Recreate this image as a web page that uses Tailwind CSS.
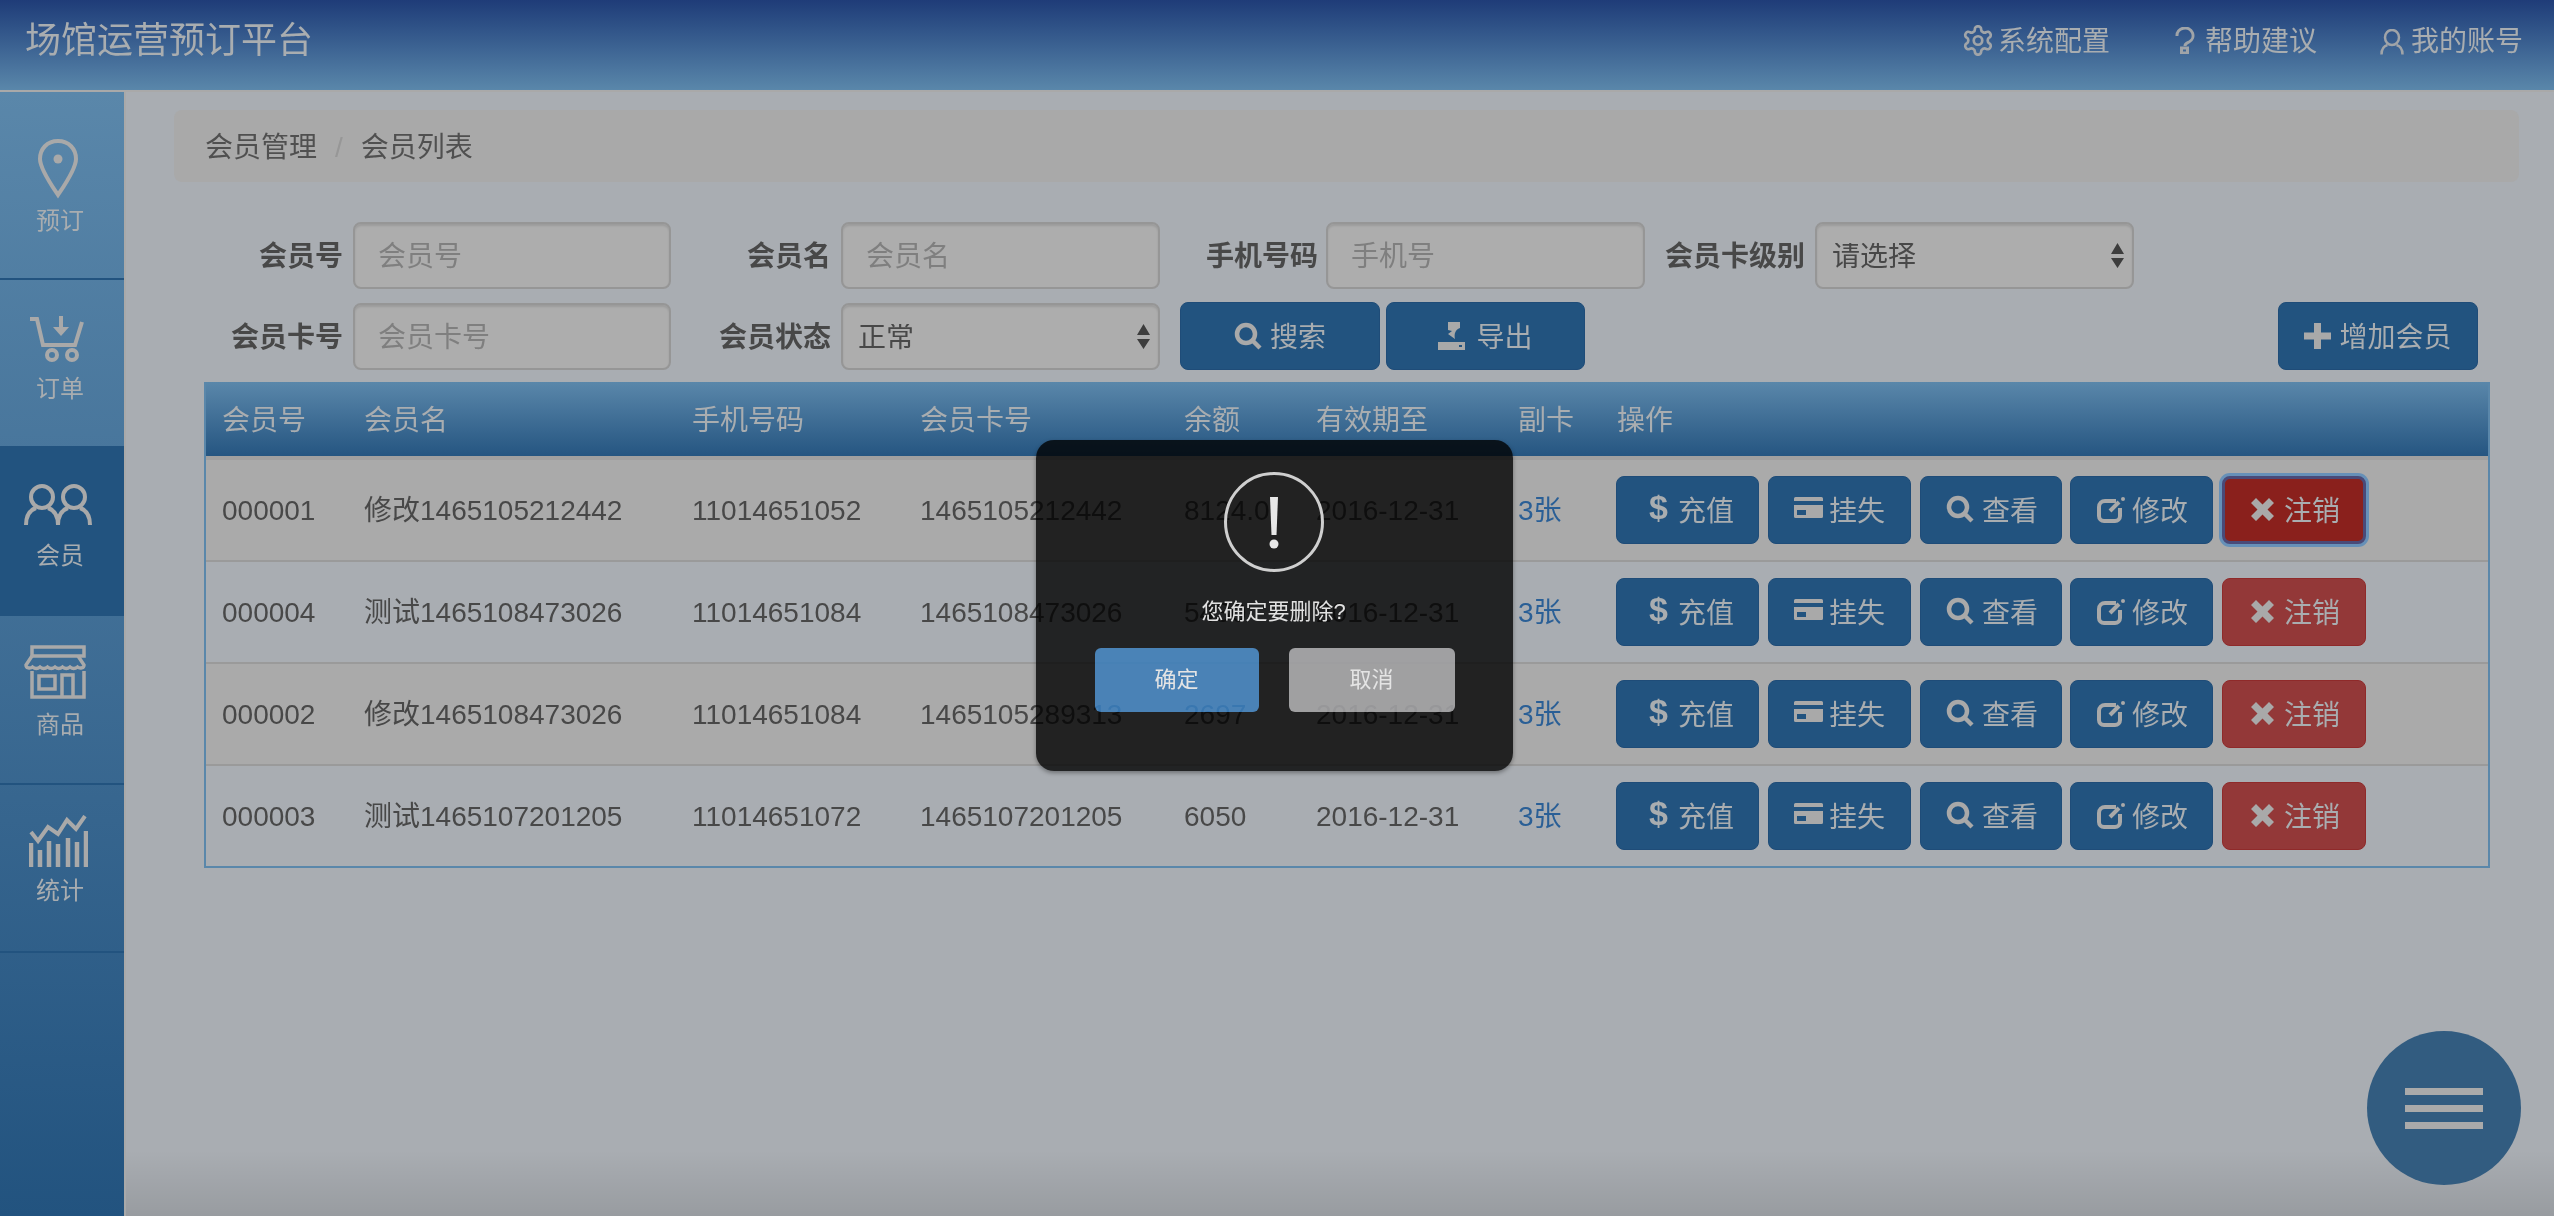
<!DOCTYPE html>
<html lang="zh-CN">
<head>
<meta charset="utf-8">
<title>场馆运营预订平台</title>
<script src="https://cdn.jsdelivr.net/npm/@tailwindcss/browser@4"></script>
</head>
<body class="m-0">
<div class="relative w-[2554px] h-[1216px] overflow-hidden flex flex-col bg-[#a9adb2] text-[#484848] text-[28px] leading-none font-['Liberation_Sans','Noto_Sans_CJK_SC',sans-serif]">

  <!-- top bar -->
  <header class="h-[92px] shrink-0 border-b-2 border-[#a9a9a9] bg-linear-to-b from-[#1f3c78] to-[#5a87aa] flex items-center pr-[31px] pl-[25px] text-[#a9adb0]">
    <h1 class="text-[36px] font-normal -mt-[9px]">场馆运营预订平台</h1>
    <nav class="ml-auto flex items-center -mt-[7px]">
      <a class="flex items-center gap-[3px]">
        <svg class="w-[34px] h-[35px] -mt-[2px]" viewBox="0 0 24 24" fill="none" stroke="#a0a4a8" stroke-width="1.900"><path d="M12.220 2h-.44a2 2 0 0 0-2 2v.18a2 2 0 0 1-1 1.730l-.43.25a2 2 0 0 1-2 0l-.15-.08a2 2 0 0 0-2.730.73l-.22.38a2 2 0 0 0 .73 2.730l.15.1a2 2 0 0 1 1 1.720v.51a2 2 0 0 1-1 1.740l-.15.09a2 2 0 0 0-.73 2.730l.22.38a2 2 0 0 0 2.730.73l.15-.08a2 2 0 0 1 2 0l.43.25a2 2 0 0 1 1 1.730V20a2 2 0 0 0 2 2h.44a2 2 0 0 0 2-2v-.18a2 2 0 0 1 1-1.730l.43-.25a2 2 0 0 1 2 0l.15.08a2 2 0 0 0 2.730-.73l.22-.39a2 2 0 0 0-.73-2.730l-.15-.08a2 2 0 0 1-1-1.740v-.5a2 2 0 0 1 1-1.740l.15-.09a2 2 0 0 0 .73-2.730l-.22-.38a2 2 0 0 0-2.730-.73l-.15.08a2 2 0 0 1-2 0l-.43-.25a2 2 0 0 1-1-1.730V4a2 2 0 0 0-2-2z"/><circle cx="12" cy="12" r="3"/></svg>
        <span>系统配置</span>
      </a>
      <a class="flex items-center gap-[10px] ml-[65px]">
        <svg class="w-[20px] h-[27px] -mt-[2px]" viewBox="0 0 20 27" fill="none" stroke="#a0a4a8" stroke-width="3"><path d="M2 9a8 7.500 0 1 1 12 6c-3 1.500-4 1.500-4 4"/><rect x="6.500" y="21" width="6" height="5"/></svg>
        <span>帮助建议</span>
      </a>
      <a class="flex items-center gap-[7px] ml-[63px]">
        <svg class="w-[24px] h-[26px]" viewBox="0 0 24 26" fill="none" stroke="#a0a4a8" stroke-width="2.500"><ellipse cx="12" cy="8.500" rx="7" ry="7.500"/><path d="M1.500 25.500c0-5 2.500-8.500 6-9.500M22.500 25.500c0-5-2.500-8.500-6-9.500"/></svg>
        <span>我的账号</span>
      </a>
    </nav>
  </header>

  <div class="flex flex-1 min-h-0">
    <!-- side nav -->
    <aside class="w-[126px] shrink-0 border-r-2 border-[#a9a9a9] bg-linear-to-b from-[#5a87aa] to-[#22537f] text-[#a9adb0] text-[24px]">
      <a class="h-[188px] border-b-2 border-[#22537f] pr-[4px] flex flex-col items-center pt-[47px]">
        <svg class="w-[42px] h-[60px] -ml-[4px]" viewBox="0 0 42 60" fill="none" stroke="#a9a9a9" stroke-width="4"><path d="M21 2C10 2 3 10 3 20c0 10 12 27 18 36 6-9 18-26 18-36C39 10 32 2 21 2z"/><circle cx="21" cy="20" r="4.500" fill="#a9a9a9" stroke="none"/></svg>
        <span class="mt-[10px]">预订</span>
      </a>
      <a class="h-[166px] pr-[4px] flex flex-col items-center pt-[36px]">
        <svg class="w-[56px] h-[46px] -ml-[4px]" viewBox="0 0 56 46" fill="none" stroke="#a9a9a9" stroke-width="4"><path d="M0 3h7l6 26h32l7-23"/><path d="M31 0v12" /><path d="M23 11h16l-8 9z" fill="#a9a9a9" stroke="none"/><circle cx="22" cy="39" r="5"/><circle cx="42" cy="39" r="5"/></svg>
        <span class="mt-[15px]">订单</span>
      </a>
      <a class="h-[170px] bg-[#22537f] pr-[4px] flex flex-col items-center pt-[38px]">
        <svg class="w-[68px] h-[41px] -ml-[4px]" viewBox="0 0 68 41" fill="none" stroke="#a9a9a9" stroke-width="4"><circle cx="18" cy="13" r="11"/><circle cx="50" cy="13" r="11"/><path d="M2 41c0-9 4-15 10-17M24 24c6 2 10 8 10 17c0-9 4-15 10-17M56 24c6 2 10 8 10 17"/></svg>
        <span class="mt-[19px]">会员</span>
      </a>
      <a class="h-[169px] border-b-2 border-[#22537f] pr-[4px] flex flex-col items-center pt-[29px]">
        <svg class="w-[68px] h-[54px] -ml-[4px]" viewBox="0 0 68 54" fill="none" stroke="#a9a9a9" stroke-width="3.500"><path d="M8 2h52v9H8z"/><path d="M8 11L2 20c0 3 4 4 6.500 2c2.500 2 5 2 7.500 0c2.500 2 5 2 7.500 0c2.500 2 5 2 7.500 0c2.500 2 5 2 7.500 0c2.500 2 5 2 7.500 0c2.500 2 5 2 7.500 0c2.500 2 6.500 1 6.500-2l-6-9"/><path d="M8 26v26h52V26"/><path d="M38 52V30h11v22"/><rect x="15" y="31" width="16" height="13"/></svg>
        <span class="mt-[14px]">商品</span>
      </a>
      <a class="h-[168px] border-b-2 border-[#22537f] pr-[4px] flex flex-col items-center pt-[30px]">
        <svg class="w-[59px] h-[52px] -ml-[4px]" viewBox="0 0 59 52" fill="none" stroke="#a9a9a9"><path stroke-width="4" d="M2 17l7 9L19 12l10 7L38 5l9 9L56 1"/><path stroke-width="4.500" d="M2 28v24M11 35v17M20 26v26M29 29v23M39 23v29M48 27v25M57 16v36"/></svg>
        <span class="mt-[12px]">统计</span>
      </a>
    </aside>

    <!-- main -->
    <main class="flex-1 min-w-0 pl-[48px] pr-[35px] pt-[18px]">
      <nav class="h-[72px] bg-[#a9a9a9] rounded-[8px] flex items-center pl-[31px] pt-[3px] text-[#505050]">
        <span>会员管理</span>
        <span class="mx-[18px] text-[#979797]">/</span>
        <span>会员列表</span>
      </nav>

      <form class="mt-[40px] ml-[30px] mr-[41px]">
        <div class="flex">
          <label class="w-[467px] flex justify-end items-center gap-[10px] font-bold"><span class="pt-[3px]">会员号</span>
            <input class="w-[318px] h-[67px] pl-[23px] pt-[3px] font-normal bg-[#adadad] border-2 border-[#969696] rounded-[8px] shadow-[inset_0_2px_2px_rgba(0,0,0,.1)] placeholder:text-[#7f7f7f]" placeholder="会员号"></label>
          <label class="w-[489px] flex justify-end items-center gap-[10px] font-bold"><span class="pt-[3px]">会员名</span>
            <input class="w-[319px] h-[67px] pl-[23px] pt-[3px] font-normal bg-[#adadad] border-2 border-[#969696] rounded-[8px] shadow-[inset_0_2px_2px_rgba(0,0,0,.1)] placeholder:text-[#7f7f7f]" placeholder="会员名"></label>
          <label class="w-[485px] flex justify-end items-center gap-[8px] font-bold"><span class="pt-[3px]">手机号码</span>
            <input class="w-[319px] h-[67px] pl-[23px] pt-[3px] font-normal bg-[#adadad] border-2 border-[#969696] rounded-[8px] shadow-[inset_0_2px_2px_rgba(0,0,0,.1)] placeholder:text-[#7f7f7f]" placeholder="手机号"></label>
          <label class="w-[489px] flex justify-end items-center gap-[10px] font-bold"><span class="pt-[3px]">会员卡级别</span>
            <span class="relative block">
              <select class="block appearance-none w-[319px] h-[67px] pl-[15px] pt-[3px] font-normal bg-[#adadad] border-2 border-[#969696] rounded-[8px] shadow-[inset_0_2px_2px_rgba(0,0,0,.1)]"><option>请选择</option></select>
              <svg class="absolute right-[10px] top-[21px] w-[13px] h-[25px]" viewBox="0 0 13 25" fill="#3d3d3d"><path d="M6.500 0L13 11H0zM0 15h13L6.500 25z"/></svg>
            </span></label>
        </div>
        <div class="flex mt-[13px] h-[68px]">
          <label class="w-[467px] flex justify-end items-center gap-[10px] font-bold"><span class="pt-[3px]">会员卡号</span>
            <input class="w-[318px] h-[67px] pl-[23px] pt-[3px] font-normal bg-[#adadad] border-2 border-[#969696] rounded-[8px] shadow-[inset_0_2px_2px_rgba(0,0,0,.1)] placeholder:text-[#7f7f7f]" placeholder="会员卡号"></label>
          <label class="w-[489px] flex justify-end items-center gap-[10px] font-bold"><span class="pt-[3px]">会员状态</span>
            <span class="relative block">
              <select class="block appearance-none w-[319px] h-[67px] pl-[15px] pt-[3px] font-normal bg-[#adadad] border-2 border-[#969696] rounded-[8px] shadow-[inset_0_2px_2px_rgba(0,0,0,.1)]"><option>正常</option></select>
              <svg class="absolute right-[10px] top-[21px] w-[13px] h-[25px]" viewBox="0 0 13 25" fill="#3d3d3d"><path d="M6.500 0L13 11H0zM0 15h13L6.500 25z"/></svg>
            </span></label>
          <button type="button" class="ml-[20px] w-[200px] h-[68px] rounded-[8px] bg-[#22537f] border border-[#1f4c78] text-[#a9adb0] pt-[3px] flex items-center justify-center gap-[8px]">
            <svg class="w-[28px] h-[28px] -mt-[3px]" viewBox="0 0 28 28" fill="none" stroke="#a9a9a9" stroke-width="4.500"><circle cx="12" cy="12" r="9"/><path d="M18 18l8 8"/></svg>搜索</button>
          <button type="button" class="ml-[6px] w-[199px] h-[68px] rounded-[8px] bg-[#22537f] border border-[#1f4c78] text-[#a9adb0] pt-[3px] flex items-center justify-center gap-[11px]">
            <svg class="w-[27px] h-[28px] -mt-[3px]" viewBox="0 0 27 28" fill="#a9a9a9"><path d="M10 0h12v6c-5 2-6 6-5 11l-7-5 4-3-4-1z"/><path d="M0 20h27v8H0z"/><rect x="21" y="23" width="3" height="2" fill="#22537f"/></svg>导出</button>
          <button type="button" class="ml-auto w-[200px] h-[68px] rounded-[8px] bg-[#22537f] border border-[#1f4c78] text-[#a9adb0] pt-[3px] flex items-center justify-center gap-[8px]">
            <svg class="w-[27px] h-[26px] -mt-[3px]" viewBox="0 0 27 26" fill="#a9a9a9"><path d="M10 0h7v9.500h10v7H17V26h-7v-9.500H0v-7h10z"/></svg>增加会员</button>
        </div>
      </form>

      <div class="mt-[12px] ml-[30px] w-[2286px] border-x-2 border-b-2 border-[#5a87aa]">
        <table class="w-full table-fixed border-separate border-spacing-0">
          <colgroup>
            <col class="w-[141px]"><col class="w-[328px]"><col class="w-[228px]"><col class="w-[264px]"><col class="w-[132px]"><col class="w-[202px]"><col class="w-[99px]"><col>
          </colgroup>
          <thead>
            <tr class="text-left text-[#a9adb0] bg-linear-to-b from-[#5a87aa] to-[#22537f]">
              <th class="h-[78px] pl-[16px] pt-[3px] font-normal border-b-4 border-[#a0a0a0]">会员号</th>
              <th class="pl-[17px] pt-[3px] font-normal border-b-4 border-[#a0a0a0]">会员名</th>
              <th class="pl-[17px] pt-[3px] font-normal border-b-4 border-[#a0a0a0]">手机号码</th>
              <th class="pl-[17px] pt-[3px] font-normal border-b-4 border-[#a0a0a0]">会员卡号</th>
              <th class="pl-[17px] pt-[3px] font-normal border-b-4 border-[#a0a0a0]">余额</th>
              <th class="pl-[17px] pt-[3px] font-normal border-b-4 border-[#a0a0a0]">有效期至</th>
              <th class="pl-[17px] pt-[3px] font-normal border-b-4 border-[#a0a0a0]">副卡</th>
              <th class="pl-[17px] pt-[3px] font-normal border-b-4 border-[#a0a0a0]">操作</th>
            </tr>
          </thead>
          <tbody>
            <tr class="bg-[#aaaaaa]">
              <td class="h-[102px] pt-[2px] pl-[16px] border-b-2 border-[#9a9a9a]">000001</td>
              <td class="pt-[2px] pl-[17px] border-b-2 border-[#9a9a9a]">修改1465105212442</td>
              <td class="pt-[2px] pl-[17px] border-b-2 border-[#9a9a9a]">11014651052</td>
              <td class="pt-[2px] pl-[17px] border-b-2 border-[#9a9a9a]">1465105212442</td>
              <td class="pt-[2px] pl-[17px] border-b-2 border-[#9a9a9a]">8124.0</td>
              <td class="pt-[2px] pl-[17px] border-b-2 border-[#9a9a9a]">2016-12-31</td>
              <td class="pt-[2px] pl-[17px] border-b-2 border-[#9a9a9a] text-[#2a5f96]">3张</td>
              <td class="pl-[16px] border-b-2 border-[#9a9a9a]">
                <div class="flex text-[#a9adb0]">
                  <button class="w-[143px] h-[68px] pl-[32px] pt-[3px] rounded-[8px] bg-[#22537f] border border-[#1f4c78] flex items-center gap-[11px]"><b class="text-[34px] w-[18px] font-bold -mt-[10px]">$</b>充值</button>
                  <button class="ml-[9px] w-[143px] h-[68px] pl-[25px] pt-[3px] rounded-[8px] bg-[#22537f] border border-[#1f4c78] flex items-center gap-[6px]"><svg class="w-[29px] h-[21px] -mt-[8px]" viewBox="0 0 29 21" fill="#a9a9a9"><path d="M0 1.500A1.500 1.500 0 0 1 1.500 0h26A1.500 1.500 0 0 1 29 1.500V4H0zM0 8h29v11.500a1.500 1.500 0 0 1-1.500 1.500h-26A1.500 1.500 0 0 1 0 19.500z"/><rect x="3" y="13" width="9" height="5" fill="#22537f"/></svg>挂失</button>
                  <button class="ml-[9px] w-[142px] h-[68px] pl-[25px] pt-[3px] rounded-[8px] bg-[#22537f] border border-[#1f4c78] flex items-center gap-[8px]"><svg class="w-[28px] h-[28px] -mt-[5px]" viewBox="0 0 28 28" fill="none" stroke="#a9a9a9" stroke-width="4.500"><circle cx="12" cy="12" r="9"/><path d="M18 18l8 8"/></svg>查看</button>
                  <button class="ml-[8px] w-[143px] h-[68px] pl-[26px] pt-[3px] rounded-[8px] bg-[#22537f] border border-[#1f4c78] flex items-center gap-[6px]"><svg class="w-[29px] h-[27px] -mt-[5px]" viewBox="0 0 29 27" fill="none" stroke="#a9a9a9" stroke-width="4"><path d="M19 5H8a6 6 0 0 0-6 6v9a5 5 0 0 0 5 5h11a5 5 0 0 0 5-5v-8"/><path d="M13 15l9-9"/><circle cx="26" cy="3" r="2" fill="#a9a9a9" stroke="none"/></svg>修改</button>
                  <button class="ml-[9px] w-[144px] h-[68px] pl-[26px] pt-[3px] rounded-[8px] bg-[#8a201c] border-[3px] border-[#4a4a78] shadow-[0_0_0_3px_#6690b8] flex items-center gap-[10px]"><svg class="w-[23px] h-[23px] -mt-[5px]" viewBox="0 0 23 23" fill="#a9a9a9"><path d="M5 0l6.500 6.500L18 0l5 5-6.500 6.500L23 18l-5 5-6.500-6.500L5 23l-5-5 6.500-6.500L0 5z"/></svg>注销</button>
                </div>
              </td>
            </tr>
            <tr>
              <td class="h-[102px] pt-[2px] pl-[16px] border-b-2 border-[#9a9a9a]">000004</td>
              <td class="pt-[2px] pl-[17px] border-b-2 border-[#9a9a9a]">测试1465108473026</td>
              <td class="pt-[2px] pl-[17px] border-b-2 border-[#9a9a9a]">11014651084</td>
              <td class="pt-[2px] pl-[17px] border-b-2 border-[#9a9a9a]">1465108473026</td>
              <td class="pt-[2px] pl-[17px] border-b-2 border-[#9a9a9a]">5430</td>
              <td class="pt-[2px] pl-[17px] border-b-2 border-[#9a9a9a]">2016-12-31</td>
              <td class="pt-[2px] pl-[17px] border-b-2 border-[#9a9a9a] text-[#2a5f96]">3张</td>
              <td class="pl-[16px] border-b-2 border-[#9a9a9a]">
                <div class="flex text-[#a9adb0]">
                  <button class="w-[143px] h-[68px] pl-[32px] pt-[3px] rounded-[8px] bg-[#22537f] border border-[#1f4c78] flex items-center gap-[11px]"><b class="text-[34px] w-[18px] font-bold -mt-[10px]">$</b>充值</button>
                  <button class="ml-[9px] w-[143px] h-[68px] pl-[25px] pt-[3px] rounded-[8px] bg-[#22537f] border border-[#1f4c78] flex items-center gap-[6px]"><svg class="w-[29px] h-[21px] -mt-[8px]" viewBox="0 0 29 21" fill="#a9a9a9"><path d="M0 1.500A1.500 1.500 0 0 1 1.500 0h26A1.500 1.500 0 0 1 29 1.500V4H0zM0 8h29v11.500a1.500 1.500 0 0 1-1.500 1.500h-26A1.500 1.500 0 0 1 0 19.500z"/><rect x="3" y="13" width="9" height="5" fill="#22537f"/></svg>挂失</button>
                  <button class="ml-[9px] w-[142px] h-[68px] pl-[25px] pt-[3px] rounded-[8px] bg-[#22537f] border border-[#1f4c78] flex items-center gap-[8px]"><svg class="w-[28px] h-[28px] -mt-[5px]" viewBox="0 0 28 28" fill="none" stroke="#a9a9a9" stroke-width="4.500"><circle cx="12" cy="12" r="9"/><path d="M18 18l8 8"/></svg>查看</button>
                  <button class="ml-[8px] w-[143px] h-[68px] pl-[26px] pt-[3px] rounded-[8px] bg-[#22537f] border border-[#1f4c78] flex items-center gap-[6px]"><svg class="w-[29px] h-[27px] -mt-[5px]" viewBox="0 0 29 27" fill="none" stroke="#a9a9a9" stroke-width="4"><path d="M19 5H8a6 6 0 0 0-6 6v9a5 5 0 0 0 5 5h11a5 5 0 0 0 5-5v-8"/><path d="M13 15l9-9"/><circle cx="26" cy="3" r="2" fill="#a9a9a9" stroke="none"/></svg>修改</button>
                  <button class="ml-[9px] w-[144px] h-[68px] pl-[28px] pt-[3px] rounded-[8px] bg-[#933838] border border-[#8f2a2a] flex items-center gap-[10px]"><svg class="w-[23px] h-[23px] -mt-[5px]" viewBox="0 0 23 23" fill="#a9a9a9"><path d="M5 0l6.500 6.500L18 0l5 5-6.500 6.500L23 18l-5 5-6.500-6.500L5 23l-5-5 6.500-6.500L0 5z"/></svg>注销</button>
                </div>
              </td>
            </tr>
            <tr class="bg-[#aaaaaa]">
              <td class="h-[102px] pt-[2px] pl-[16px] border-b-2 border-[#9a9a9a]">000002</td>
              <td class="pt-[2px] pl-[17px] border-b-2 border-[#9a9a9a]">修改1465108473026</td>
              <td class="pt-[2px] pl-[17px] border-b-2 border-[#9a9a9a]">11014651084</td>
              <td class="pt-[2px] pl-[17px] border-b-2 border-[#9a9a9a]">1465105289313</td>
              <td class="pt-[2px] pl-[17px] border-b-2 border-[#9a9a9a]">2697</td>
              <td class="pt-[2px] pl-[17px] border-b-2 border-[#9a9a9a]">2016-12-31</td>
              <td class="pt-[2px] pl-[17px] border-b-2 border-[#9a9a9a] text-[#2a5f96]">3张</td>
              <td class="pl-[16px] border-b-2 border-[#9a9a9a]">
                <div class="flex text-[#a9adb0]">
                  <button class="w-[143px] h-[68px] pl-[32px] pt-[3px] rounded-[8px] bg-[#22537f] border border-[#1f4c78] flex items-center gap-[11px]"><b class="text-[34px] w-[18px] font-bold -mt-[10px]">$</b>充值</button>
                  <button class="ml-[9px] w-[143px] h-[68px] pl-[25px] pt-[3px] rounded-[8px] bg-[#22537f] border border-[#1f4c78] flex items-center gap-[6px]"><svg class="w-[29px] h-[21px] -mt-[8px]" viewBox="0 0 29 21" fill="#a9a9a9"><path d="M0 1.500A1.500 1.500 0 0 1 1.500 0h26A1.500 1.500 0 0 1 29 1.500V4H0zM0 8h29v11.500a1.500 1.500 0 0 1-1.500 1.500h-26A1.500 1.500 0 0 1 0 19.500z"/><rect x="3" y="13" width="9" height="5" fill="#22537f"/></svg>挂失</button>
                  <button class="ml-[9px] w-[142px] h-[68px] pl-[25px] pt-[3px] rounded-[8px] bg-[#22537f] border border-[#1f4c78] flex items-center gap-[8px]"><svg class="w-[28px] h-[28px] -mt-[5px]" viewBox="0 0 28 28" fill="none" stroke="#a9a9a9" stroke-width="4.500"><circle cx="12" cy="12" r="9"/><path d="M18 18l8 8"/></svg>查看</button>
                  <button class="ml-[8px] w-[143px] h-[68px] pl-[26px] pt-[3px] rounded-[8px] bg-[#22537f] border border-[#1f4c78] flex items-center gap-[6px]"><svg class="w-[29px] h-[27px] -mt-[5px]" viewBox="0 0 29 27" fill="none" stroke="#a9a9a9" stroke-width="4"><path d="M19 5H8a6 6 0 0 0-6 6v9a5 5 0 0 0 5 5h11a5 5 0 0 0 5-5v-8"/><path d="M13 15l9-9"/><circle cx="26" cy="3" r="2" fill="#a9a9a9" stroke="none"/></svg>修改</button>
                  <button class="ml-[9px] w-[144px] h-[68px] pl-[28px] pt-[3px] rounded-[8px] bg-[#933838] border border-[#8f2a2a] flex items-center gap-[10px]"><svg class="w-[23px] h-[23px] -mt-[5px]" viewBox="0 0 23 23" fill="#a9a9a9"><path d="M5 0l6.500 6.500L18 0l5 5-6.500 6.500L23 18l-5 5-6.500-6.500L5 23l-5-5 6.500-6.500L0 5z"/></svg>注销</button>
                </div>
              </td>
            </tr>
            <tr>
              <td class="h-[100px] pt-[2px] pl-[16px]">000003</td>
              <td class="pt-[2px] pl-[17px]">测试1465107201205</td>
              <td class="pt-[2px] pl-[17px]">11014651072</td>
              <td class="pt-[2px] pl-[17px]">1465107201205</td>
              <td class="pt-[2px] pl-[17px]">6050</td>
              <td class="pt-[2px] pl-[17px]">2016-12-31</td>
              <td class="pt-[2px] pl-[17px] text-[#2a5f96]">3张</td>
              <td class="pl-[16px]">
                <div class="flex text-[#a9adb0]">
                  <button class="w-[143px] h-[68px] pl-[32px] pt-[3px] rounded-[8px] bg-[#22537f] border border-[#1f4c78] flex items-center gap-[11px]"><b class="text-[34px] w-[18px] font-bold -mt-[10px]">$</b>充值</button>
                  <button class="ml-[9px] w-[143px] h-[68px] pl-[25px] pt-[3px] rounded-[8px] bg-[#22537f] border border-[#1f4c78] flex items-center gap-[6px]"><svg class="w-[29px] h-[21px] -mt-[8px]" viewBox="0 0 29 21" fill="#a9a9a9"><path d="M0 1.500A1.500 1.500 0 0 1 1.500 0h26A1.500 1.500 0 0 1 29 1.500V4H0zM0 8h29v11.500a1.500 1.500 0 0 1-1.500 1.500h-26A1.500 1.500 0 0 1 0 19.500z"/><rect x="3" y="13" width="9" height="5" fill="#22537f"/></svg>挂失</button>
                  <button class="ml-[9px] w-[142px] h-[68px] pl-[25px] pt-[3px] rounded-[8px] bg-[#22537f] border border-[#1f4c78] flex items-center gap-[8px]"><svg class="w-[28px] h-[28px] -mt-[5px]" viewBox="0 0 28 28" fill="none" stroke="#a9a9a9" stroke-width="4.500"><circle cx="12" cy="12" r="9"/><path d="M18 18l8 8"/></svg>查看</button>
                  <button class="ml-[8px] w-[143px] h-[68px] pl-[26px] pt-[3px] rounded-[8px] bg-[#22537f] border border-[#1f4c78] flex items-center gap-[6px]"><svg class="w-[29px] h-[27px] -mt-[5px]" viewBox="0 0 29 27" fill="none" stroke="#a9a9a9" stroke-width="4"><path d="M19 5H8a6 6 0 0 0-6 6v9a5 5 0 0 0 5 5h11a5 5 0 0 0 5-5v-8"/><path d="M13 15l9-9"/><circle cx="26" cy="3" r="2" fill="#a9a9a9" stroke="none"/></svg>修改</button>
                  <button class="ml-[9px] w-[144px] h-[68px] pl-[28px] pt-[3px] rounded-[8px] bg-[#933838] border border-[#8f2a2a] flex items-center gap-[10px]"><svg class="w-[23px] h-[23px] -mt-[5px]" viewBox="0 0 23 23" fill="#a9a9a9"><path d="M5 0l6.500 6.500L18 0l5 5-6.500 6.500L23 18l-5 5-6.500-6.500L5 23l-5-5 6.500-6.500L0 5z"/></svg>注销</button>
                </div>
              </td>
            </tr>
          </tbody>
        </table>
      </div>
    </main>
  </div>

  <!-- bottom shading of the dim layer -->
  <div class="absolute left-[126px] right-0 bottom-0 h-[66px] bg-linear-to-b from-transparent to-black/10"></div>

  <!-- floating menu -->
  <button class="absolute left-[2367px] top-[1031px] w-[154px] h-[154px] rounded-full bg-[#325c80] flex flex-col items-center justify-center gap-[10px]">
    <span class="block w-[78px] h-[7px] bg-[#aaaaaa]"></span>
    <span class="block w-[78px] h-[7px] bg-[#aaaaaa]"></span>
    <span class="block w-[78px] h-[7px] bg-[#aaaaaa]"></span>
  </button>

  <!-- confirm dialog -->
  <div class="absolute left-[1036px] top-[440px] w-[477px] h-[331px] rounded-[18px] bg-black/80 shadow-[0_2px_4px_rgba(0,0,0,.35)] flex flex-col items-center pt-[32px] text-[22px] text-[#e2e2e2]">
    <svg class="w-[100px] h-[100px] shrink-0 -ml-[2px]" viewBox="0 0 100 100" fill="none"><circle cx="50" cy="50" r="48.500" stroke="#cfcfcf" stroke-width="3"/><path d="M46 25h8l-1.500 38h-5z" fill="#e8e8e8"/><circle cx="50" cy="72" r="4.500" fill="#e8e8e8"/></svg>
    <p class="mt-[29px] -ml-[2px] leading-[22px]">您确定要删除?</p>
    <div class="mt-[25px] flex gap-[30px]">
      <button class="w-[164px] h-[64px] rounded-[6px] bg-[#2e6fab] mix-blend-screen text-[#e0e0e0]">确定</button>
      <button class="w-[166px] h-[64px] rounded-[6px] bg-[#919193] mix-blend-screen text-[#e0e0e0]">取消</button>
    </div>
  </div>
</div>
</body>
</html>
